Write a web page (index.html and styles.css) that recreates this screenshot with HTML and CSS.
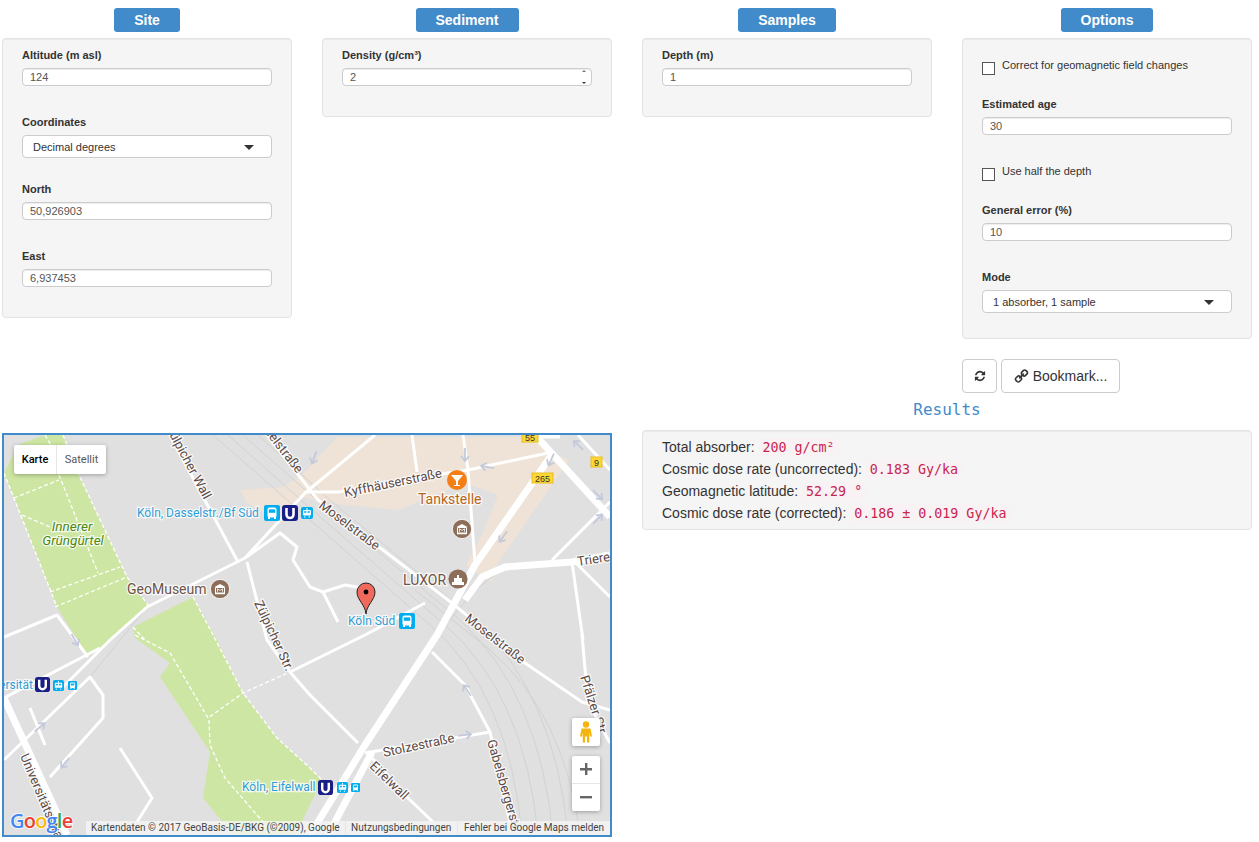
FILE: index.html
```html
<!DOCTYPE html>
<html lang="en">
<head>
    <meta charset="UTF-8">
    <meta name="viewport" content="width=device-width, initial-scale=1.0">
    <title>Cosmic dose rate</title>
    <link rel="stylesheet" href="styles.css">
</head>
<body>
    <div class="top-row">
        <div class="col">
            <div class="head-btn head-site">Site</div>
            <div class="panel">
                <label class="field-label">Altitude (m asl)</label>
                <input class="text-input" type="text" value="124">
                <label class="field-label">Coordinates</label>
                <div class="select-box"><span>Decimal degrees</span><i class="caret"></i></div>
                <label class="field-label">North</label>
                <input class="text-input" type="text" value="50,926903">
                <label class="field-label">East</label>
                <input class="text-input" type="text" value="6,937453">
            </div>
        </div>

        <div class="col">
            <div class="head-btn head-sediment">Sediment</div>
            <div class="panel">
                <label class="field-label">Density (g/cm³)</label>
                <div class="number-wrap">
                    <input class="text-input" type="text" value="2">
                    <i class="spin spin-up"></i>
                    <i class="spin spin-down"></i>
                </div>
            </div>
        </div>

        <div class="col">
            <div class="head-btn head-samples">Samples</div>
            <div class="panel">
                <label class="field-label">Depth (m)</label>
                <input class="text-input" type="text" value="1">
            </div>
        </div>

        <div class="col">
            <div class="head-btn head-options">Options</div>
            <div class="panel">
                <label class="check check-first"><input type="checkbox"><span>Correct for geomagnetic field changes</span></label>
                <label class="field-label">Estimated age</label>
                <input class="text-input" type="text" value="30">
                <label class="check"><input type="checkbox"><span>Use half the depth</span></label>
                <label class="field-label">General error (%)</label>
                <input class="text-input" type="text" value="10">
                <label class="field-label">Mode</label>
                <div class="select-box"><span>1 absorber, 1 sample</span><i class="caret"></i></div>
            </div>
            <div class="actions">
                <button class="btn btn-icon">
                    <svg class="icon-refresh" viewBox="0 0 1792 1792"><path d="M1639 1056q0 5-1 7-64 268-268 434.5t-478 166.5q-146 0-282.5-55t-243.5-157l-129 129q-19 19-45 19t-45-19-19-45v-448q0-26 19-45t45-19h448q26 0 45 19t19 45-19 45l-137 137q71 66 161 102t187 36q134 0 250-65t186-179q11-17 53-117 8-23 30-23h192q13 0 22.5 9.5t9.5 22.5zm25-800v448q0 26-19 45t-45 19h-448q-26 0-45-19t-19-45 19-45l138-138q-148-137-349-137-134 0-250 65t-186 179q-11 17-53 117-8 23-30 23h-199q-13 0-22.5-9.5t-9.5-22.5v-7q65-268 270-434.5t480-166.5q146 0 284 55.5t245 156.5l130-129q19-19 45-19t45 19 19 45z"/></svg>
                </button>
                <button class="btn btn-bookmark">
                    <svg class="icon-link" viewBox="0 0 1792 1792"><path d="M1520 1216q0-40-28-68l-208-208q-28-28-68-28-42 0-72 32 3 3 19 18.5t21.5 21.5 15 19 13 25.5 3.5 27.5q0 40-28 68t-68 28q-15 0-27.5-3.5t-25.5-13-19-15-21.5-21.5-18.5-19q-33 31-33 73 0 40 28 68l206 207q27 27 68 27 40 0 68-26l147-146q28-28 28-67zm-703-705q0-40-28-68l-206-207q-28-28-68-28-39 0-68 27l-147 146q-28 28-28 67 0 40 28 68l208 208q27 27 68 27 42 0 72-31-3-3-19-18.5t-21.5-21.5-15-19-13-25.5-3.5-27.5q0-40 28-68t68-28q15 0 27.5 3.5t25.5 13 19 15 21.5 21.5 18.5 19q33-31 33-73zm895 705q0 120-85 203l-147 146q-83 83-203 83-121 0-204-85l-206-207q-83-83-83-203 0-123 88-209l-88-88q-86 88-208 88-120 0-204-84l-208-208q-84-84-84-204t85-203l147-146q83-83 203-83 121 0 204 85l206 207q83 83 83 203 0 123-88 209l88 88q86-88 208-88 120 0 204 84l208 208q84 84 84 204z"/></svg>
                    Bookmark...
                </button>
            </div>
        </div>
    </div>

    <div class="bottom-row">
        <div class="map">
            <svg class="map-canvas" viewBox="4 435 606 400">
                <defs>
                    <symbol id="bus" viewBox="0 0 16 16">
                        <rect width="16" height="16" rx="2" fill="#00aeef"/>
                        <rect x="3.5" y="2.5" width="9" height="10" rx="2" fill="#fff"/>
                        <rect x="4.8" y="4.4" width="6.4" height="3.4" fill="#00aeef"/>
                        <rect x="4" y="12" width="2" height="2" fill="#fff"/>
                        <rect x="10" y="12" width="2" height="2" fill="#fff"/>
                    </symbol>
                    <symbol id="tram" viewBox="0 0 12 12">
                        <rect width="12" height="12" rx="2" fill="#00aeef"/>
                        <rect x="2" y="3" width="8" height="5.5" rx="1" fill="#fff"/>
                        <rect x="3.2" y="4.2" width="2.2" height="1.6" fill="#00aeef"/>
                        <rect x="6.6" y="4.2" width="2.2" height="1.6" fill="#00aeef"/>
                        <path d="M3 10h1.5M7.5 10H9M6 1v2" stroke="#fff" fill="none"/>
                    </symbol>
                    <symbol id="ubahn" viewBox="0 0 16 16">
                        <rect width="16" height="16" rx="3" fill="#1a1f87"/>
                        <path d="M4.5 3v6.5a3.5 3.5 0 0 0 7 0V3" fill="none" stroke="#fff" stroke-width="2.6"/>
                    </symbol>
                    <symbol id="museum" viewBox="0 0 20 20">
                        <circle cx="10" cy="10" r="9.6" fill="#8d6e58" stroke="#fff" stroke-width=".8"/>
                        <path d="M4.5 8 10 5l5.500 3zM5 14h10v1.300H5z" fill="#fff"/>
                        <path d="M5.500 8.500h9V14h-9z" fill="none" stroke="#fff"/>
                        <path d="M7.500 12.800V9.800L10 11.500l2.500-1.700v3" fill="none" stroke="#fff" stroke-width=".8"/>
                    </symbol>
                    <symbol id="arrow" viewBox="-8 -5 16 10" overflow="visible">
                        <path d="M-7 0H5M1-4l5 4-5 4" fill="none" stroke="#c4cadc" stroke-width="1.800"/>
                    </symbol>
                </defs>

                <rect class="m-ground" x="4" y="435" width="606" height="400"/>

                <path class="m-sand" d="M240 490 283 487 304 473 337 437H527L553 453 569 460 498 563 491 582 466 565 483 533 498 495 465 483 398 510 345 505 300 497 277 520 247 503Z"/>

                <path class="m-park" d="M45 435H63L78 473 127 577 148 605 143 612 110 640 88 657 57 607 4 473 18 445Z"/>
                <path class="m-park" d="M133 627 193 597 217 640 243 693 277 738 310 768 322 780 305 815 296 835H233L203 798 210 752 160 677 170 663 135 638Z"/>

                <g class="m-dash">
                    <path d="M45 435 52 447M63 435 78 473 127 577 148 605"/>
                    <path d="M4 473 57 607M14 498 59 480M59 475 98 573M22 515 50 527M50 592 120 567M55 607 127 577"/>
                    <path d="M133 627 145 640M135 635 170 653 208 718 243 693 290 672M193 597 213 635 243 693 277 738 310 768 322 780M209 720 210 745 225 778 263 822"/>
                </g>

                <g class="m-rail">
                    <path d="M213 435 310 520 430 625Q510 695 522 835"/>
                    <path d="M228 435 310 508 445 625Q525 695 538 835"/>
                    <path d="M243 435 320 503 460 620Q540 695 553 835"/>
                    <path d="M258 435 330 500 475 620Q555 695 568 835"/>
                    <path d="M415 590 490 650Q565 715 580 835"/>
                    <path d="M4 762 90 677 143 612M322 822 365 745 437 635 475 590 505 567 572 562"/>
                </g>

                <g class="m-road">
                    <path d="M170 435 238 562M247 562 267 640 290 672 310 695 358 743M290 672 365 635 425 603"/>
                    <path d="M375 435 305 493 245 558 147 607 110 640 60 690"/>
                    <path d="M267 435 318 500 452 603 525 663 582 702 610 710"/>
                    <path d="M305 492H338L448 473 468 470 548 453M463 435 468 470 475 563M412 435 417 472"/>
                    <path d="M245 558 280 533 297 547 293 560 310 587 323 592 345 585 375 590M323 592 338 622"/>
                    <path d="M4 637 57 615 88 657M4 698 100 648M4 760 90 677 103 695V718L50 777"/>
                    <path d="M120 748 152 798 137 822"/>
                    <path d="M365 753 490 732M432 652 465 685 490 732 512 832"/>
                    <path d="M372 758 408 798 433 822M582 635 588 702 610 743M572 562 583 640M575 562 610 597"/>
                    <path d="M30 708 45 745M578 435 610 470M552 560 610 502"/>
                </g>
                <g class="m-road m-wide">
                    <path d="M310 835 365 745 437 635 475 565 553 453"/>
                    <path d="M328 835 372 752"/>
                    <path d="M535 435 610 517M522 435H560"/>
                    <path d="M465 600 482 577 505 567 572 562 610 555"/>
                    <path d="M4 698 67 835"/>
                </g>

                <use href="#arrow" width="16" height="10" transform="translate(314 458) rotate(110) translate(-8 -5)"/>
                <use href="#arrow" width="16" height="10" transform="translate(465 455) rotate(90) translate(-8 -5)"/>
                <use href="#arrow" width="16" height="10" transform="translate(487 467) rotate(190) translate(-8 -5)"/>
                <use href="#arrow" width="16" height="10" transform="translate(551 460) rotate(115) translate(-8 -5)"/>
                <use href="#arrow" width="16" height="10" transform="translate(503 537) rotate(125) translate(-8 -5)"/>
                <use href="#arrow" width="16" height="10" transform="translate(578 445) rotate(225) translate(-8 -5)"/>
                <use href="#arrow" width="16" height="10" transform="translate(598 495) rotate(45) translate(-8 -5)"/>
                <use href="#arrow" width="16" height="10" transform="translate(598 519) rotate(-45) translate(-8 -5)"/>
                <use href="#arrow" width="16" height="10" transform="translate(40 727) rotate(-40) translate(-8 -5)"/>
                <use href="#arrow" width="16" height="10" transform="translate(65 763) rotate(130) translate(-8 -5)"/>
                <use href="#arrow" width="16" height="10" transform="translate(75 640) rotate(60) translate(-8 -5)"/>
                <use href="#arrow" width="16" height="10" transform="translate(467 690) rotate(235) translate(-8 -5)"/>
                <use href="#arrow" width="16" height="10" transform="translate(465 735) rotate(-8) translate(-8 -5)"/>

                <text class="m-label" text-anchor="end" transform="translate(204 500) rotate(62)">Zülpicher Wall</text>
                <text class="m-label" text-anchor="end" transform="translate(297 474) rotate(52)">Moselstraße</text>
                <text class="m-label" transform="translate(318 507) rotate(37)">Moselstraße</text>
                <text class="m-label" transform="translate(464 620) rotate(38)">Moselstraße</text>
                <text class="m-label" transform="translate(345 497) rotate(-11.500)">Kyffhäuserstraße</text>
                <text class="m-label" transform="translate(254 603) rotate(65)">Zülpicher Str.</text>
                <text class="m-label" transform="translate(384 757) rotate(-12)">Stolzestraße</text>
                <text class="m-label" transform="translate(369 767) rotate(44)">Eifelwall</text>
                <text class="m-label" transform="translate(487 741) rotate(74)">Gabelsbergerstr.</text>
                <text class="m-label" transform="translate(580 677) rotate(72)">Pfälzer Str.</text>
                <text class="m-label" transform="translate(578 566) rotate(-9)">Trierer Str.</text>
                <text class="m-label" transform="translate(20 756) rotate(67)">Universitätsstraße</text>

                <text class="m-poi m-brown" x="127" y="594">GeoMuseum</text>
                <text class="m-poi m-brown" x="403" y="585">LUXOR</text>
                <text class="m-poi m-orange" x="418" y="504">Tankstelle</text>
                <text class="m-park-label" x="72" y="531" text-anchor="middle">Innerer</text>
                <text class="m-park-label" x="73" y="545" text-anchor="middle">Grüngürtel</text>
                <text class="m-transit" x="137" y="517">Köln, Dasselstr./Bf Süd</text>
                <text class="m-transit" x="348" y="625">Köln Süd</text>
                <text class="m-transit" x="33" y="689" text-anchor="end">Universität</text>
                <text class="m-transit" x="242" y="791">Köln, Eifelwall</text>

                <use href="#bus" x="264" y="505" width="16" height="16"/>
                <use href="#ubahn" x="282" y="505" width="16" height="16"/>
                <use href="#tram" x="301" y="507" width="12" height="12"/>
                <use href="#bus" x="399" y="613" width="16" height="16"/>
                <use href="#ubahn" x="35" y="677" width="15" height="15"/>
                <use href="#tram" x="53" y="680" width="11" height="11"/>
                <use href="#bus" x="68" y="681" width="9" height="9"/>
                <use href="#ubahn" x="318" y="780" width="15" height="15"/>
                <use href="#tram" x="337" y="782" width="11" height="11"/>
                <use href="#bus" x="351" y="783" width="9" height="9"/>

                <use href="#museum" x="210" y="579" width="20" height="20"/>
                <use href="#museum" x="452" y="519" width="20" height="20"/>
                <circle cx="458" cy="579" r="9.600" class="m-brown-fill"/>
                <path class="m-white" d="M452 585V582H454V578H457V575H459V578H462V582H464V585Z"/>

                <circle cx="457" cy="480" r="10" class="m-orange-fill"/>
                <path class="m-white" d="M451 475H463L458 481V485H460V486H454V485H456V481Z"/>

                <path class="m-pin" d="M366 614C365.500 605 357 600 357 592A9 9 0 0 1 375 592C375 600 366.500 605 366 614Z"/>
                <circle cx="366" cy="592" r="2.400"/>

                <rect class="m-shield" x="532" y="473" width="21" height="10"/>
                <rect class="m-shield" x="522" y="433" width="16" height="9"/>
                <rect class="m-shield" x="591" y="457" width="11" height="10"/>
                <text class="m-shield-text" x="542.500" y="481.500" text-anchor="middle">265</text>
                <text class="m-shield-text" x="530" y="440.500" text-anchor="middle">55</text>
                <text class="m-shield-text" x="596.500" y="465.500" text-anchor="middle">9</text>

                <text class="m-google" x="10" y="828"><tspan class="g-blue">G</tspan><tspan class="g-red">o</tspan><tspan class="g-yellow">o</tspan><tspan class="g-blue">g</tspan><tspan class="g-green">l</tspan><tspan class="g-red">e</tspan></text>
            </svg>

            <div class="map-type">
                <span class="type-on">Karte</span>
                <span class="type-off">Satellit</span>
            </div>

            <div class="map-btn pegman">
                <svg width="16" height="22" viewBox="0 0 16 22"><circle cx="8" cy="3.500" r="3.200"/><path d="M3.500 7.500h9l1.500 8h-2l-.7-4v10H9v-6H7v6H4.700v-10l-.7 4H2z"/></svg>
            </div>
            <div class="map-zoom">
                <div class="zoom-part">
                    <svg width="12" height="12" viewBox="0 0 12 12"><path d="M5 0h2.400v5H12v2.400H7.400V12H5V7.400H0V5h5z"/></svg>
                </div>
                <div class="zoom-part">
                    <svg width="12" height="12" viewBox="0 0 12 12"><path d="M0 5h12v2.400H0z"/></svg>
                </div>
            </div>

            <div class="map-attr">
                <span class="attr-data">Kartendaten © 2017 GeoBasis-DE/BKG (©2009), Google</span>
                <span class="attr-terms">Nutzungsbedingungen</span>
                <span class="attr-report">Fehler bei Google Maps melden</span>
            </div>
        </div>

        <div class="results">
            <div class="results-title">Results</div>
            <div class="panel results-panel">
                <div class="result-line">Total absorber: <code>200 g/cm²</code></div>
                <div class="result-line">Cosmic dose rate (uncorrected): <code>0.183 Gy/ka</code></div>
                <div class="result-line">Geomagnetic latitude: <code>52.29 °</code></div>
                <div class="result-line">Cosmic dose rate (corrected): <code>0.186 ± 0.019 Gy/ka</code></div>
            </div>
        </div>
    </div>
</body>
</html>
```

FILE: styles.css
```css
* {
    box-sizing: border-box;
}
body {
    margin: 0;
    padding: 8px 7px 0 2px;
    font-family: "Liberation Sans", Arial, sans-serif;
    font-size: 14px;
    color: #333;
    background: #fff;
}
.top-row {
    display: grid;
    grid-template-columns: repeat(4, 290px);
    gap: 30px;
}
.col {
    display: flex;
    flex-direction: column;
    align-items: center;
}
.head-btn {
    height: 24px;
    margin-bottom: 6px;
    background-color: #428bca;
    border-radius: 3px;
    color: #fff;
    font-weight: bold;
    font-size: 14px;
    line-height: 24px;
    text-align: center;
}
.head-site { width: 66px; }
.head-sediment { width: 103px; }
.head-samples { width: 98px; }
.head-options { width: 92px; }

.panel {
    width: 100%;
    padding: 9px 19px 1px;
    background-color: #f5f5f5;
    border: 1px solid #e3e3e3;
    border-radius: 4px;
    box-shadow: inset 0 1px 1px rgba(0,0,0,0.05);
}
.field-label {
    display: block;
    height: 14px;
    margin-bottom: 6px;
    font-size: 11px;
    font-weight: bold;
    line-height: 14px;
}
.text-input {
    display: block;
    width: 250px;
    height: 18px;
    margin-bottom: 29px;
    padding: 0 7px;
    border: 1px solid #ccc;
    border-radius: 4px;
    background: #fff;
    box-shadow: inset 0 1px 1px rgba(0,0,0,0.075);
    font-family: inherit;
    font-size: 11px;
    color: #555;
}
.select-box {
    display: flex;
    align-items: center;
    justify-content: space-between;
    width: 250px;
    height: 23px;
    margin-bottom: 24px;
    padding: 1px 17px 0 10px;
    border: 1px solid #ccc;
    border-radius: 4px;
    background: #fff;
    font-size: 11px;
}
.caret {
    width: 0;
    height: 0;
    border-left: 5px solid transparent;
    border-right: 5px solid transparent;
    border-top: 5px solid #333;
}
.number-wrap {
    position: relative;
}
.spin {
    position: absolute;
    right: 6px;
    width: 0;
    height: 0;
    border-left: 2px solid transparent;
    border-right: 2px solid transparent;
}
.spin-up {
    top: 2px;
    border-bottom: 2px solid #777;
}
.spin-down {
    top: 14px;
    border-top: 2px solid #333;
}
.check {
    display: flex;
    gap: 7px;
    height: 39px;
    font-size: 11px;
    line-height: 14px;
}
.check-first {
    margin-top: 10px;
}
.check input {
    appearance: none;
    flex: none;
    width: 13px;
    height: 13px;
    margin: 4px 0 0;
    border: 1px solid #555;
    background: #fff;
}
.actions {
    display: flex;
    gap: 4px;
    width: 100%;
    margin-top: 20px;
}
.btn {
    display: flex;
    align-items: center;
    justify-content: center;
    height: 34px;
    background: #fff;
    border: 1px solid #ccc;
    border-radius: 4px;
    color: #333;
    font-family: inherit;
    font-size: 14px;
}
.btn-icon {
    width: 35px;
    padding: 0;
}
.btn-bookmark {
    gap: 4px;
    width: 119px;
    padding: 0;
}
.icon-refresh {
    width: 12px;
    height: 12px;
    fill: #333;
}
.icon-link {
    width: 15px;
    height: 15px;
    fill: #333;
    transform: scaleX(-1);
}

.bottom-row {
    display: grid;
    grid-template-columns: 610px 610px;
    gap: 30px;
    margin-top: 7px;
}
.results-title {
    height: 20px;
    margin-bottom: 10px;
    font-family: "DejaVu Sans Mono", monospace;
    font-size: 16px;
    line-height: 20px;
    text-align: center;
    color: #428bca;
}
.results-panel {
    height: 100px;
    padding-top: 5px;
}
.result-line {
    height: 22px;
    font-size: 14px;
    line-height: 22px;
}
code {
    padding: 2px 4px;
    background-color: #f9f2f4;
    border-radius: 4px;
    color: #c7254e;
    font-family: "DejaVu Sans Mono", "Liberation Mono", monospace;
    font-size: 13.300px;
}

.map {
    position: relative;
    width: 610px;
    height: 404px;
    margin-top: 33px;
    border: 2px solid #428bca;
    overflow: hidden;
}
.map-canvas {
    display: block;
    width: 606px;
    height: 400px;
}
.m-ground { fill: #e0e0e0; }
.m-sand { fill: #eee3d6; }
.m-park { fill: #cee6a3; }
.m-dash {
    fill: none;
    stroke: #fff;
    stroke-width: 1.300;
    stroke-dasharray: 4 2.500;
}
.m-rail {
    fill: none;
    stroke: #d2d2d2;
    stroke-width: 1;
}
.m-road {
    fill: none;
    stroke: #fff;
    stroke-width: 3;
    stroke-linejoin: round;
}
.m-wide { stroke-width: 7; }
.m-label,
.m-poi,
.m-transit,
.m-park-label {
    font-family: Roboto, sans-serif;
    stroke: #fff;
    stroke-width: 2.500;
    stroke-opacity: 0.8;
    paint-order: stroke;
}
.m-label {
    font-size: 13px;
    fill: #5c4a45;
}
.m-poi { font-size: 14px; }
.m-brown { fill: #6d5348; }
.m-orange { fill: #b8661a; }
.m-transit {
    font-size: 12px;
    fill: #2f9ed6;
}
.m-park-label {
    font-size: 13.500px;
    font-style: italic;
    fill: #4a8a14;
}
.m-brown-fill { fill: #8d6e58; }
.m-orange-fill { fill: #f57f17; }
.m-white { fill: #fff; }
.m-pin {
    fill: #f0695d;
    stroke: #222;
    stroke-width: 1;
}
.m-shield {
    fill: #fdd835;
    stroke: #e8bd20;
    stroke-width: 1;
}
.m-shield-text {
    font-family: "Liberation Sans", sans-serif;
    font-size: 9px;
    fill: #333;
}
.m-google {
    font-family: "Open Sans", sans-serif;
    font-size: 20px;
    font-weight: 600;
    letter-spacing: -0.8px;
    stroke: #fff;
    stroke-width: 2px;
    stroke-opacity: 0.7;
    paint-order: stroke;
}
.g-blue { fill: #4285f4; }
.g-red { fill: #ea4335; }
.g-yellow { fill: #fbbc05; }
.g-green { fill: #34a853; }

.map-type {
    position: absolute;
    left: 10px;
    top: 10px;
    display: flex;
    height: 29px;
    background: #fff;
    border-radius: 2px;
    box-shadow: 0 1px 4px rgba(0,0,0,0.3);
    font-family: Roboto, sans-serif;
    font-size: 11px;
    line-height: 29px;
}
.type-on {
    width: 43px;
    border-right: 1px solid #e6e6e6;
    color: #000;
    font-weight: 500;
    text-align: center;
}
.type-off {
    width: 49px;
    color: #565656;
    text-align: center;
}
.map-btn {
    position: absolute;
    left: 568px;
    top: 283px;
    display: flex;
    align-items: center;
    justify-content: center;
    width: 28px;
    height: 28px;
    background: #fff;
    border-radius: 2px;
    box-shadow: 0 1px 4px rgba(0,0,0,0.3);
}
.pegman svg { fill: #f5b50f; }
.map-zoom {
    position: absolute;
    left: 568px;
    top: 321px;
    width: 28px;
    height: 55px;
    background: #fff;
    border-radius: 2px;
    box-shadow: 0 1px 4px rgba(0,0,0,0.3);
}
.zoom-part {
    display: flex;
    align-items: center;
    justify-content: center;
    height: 27.500px;
}
.zoom-part:first-child {
    border-bottom: 1px solid #e6e6e6;
}
.zoom-part svg { fill: #666; }
.map-attr {
    position: absolute;
    left: 82px;
    right: 0;
    bottom: 0;
    display: flex;
    height: 14px;
    background: rgba(245,245,245,0.8);
    font-family: Roboto, sans-serif;
    font-size: 10px;
    line-height: 14px;
    color: #444;
    white-space: nowrap;
}
.attr-data {
    width: 260px;
    padding-left: 5px;
    border-right: 1px solid #e6e6e6;
}
.attr-terms {
    width: 112px;
    padding-left: 5px;
    border-right: 1px solid #e6e6e6;
}
.attr-report {
    padding-left: 6px;
}
```
